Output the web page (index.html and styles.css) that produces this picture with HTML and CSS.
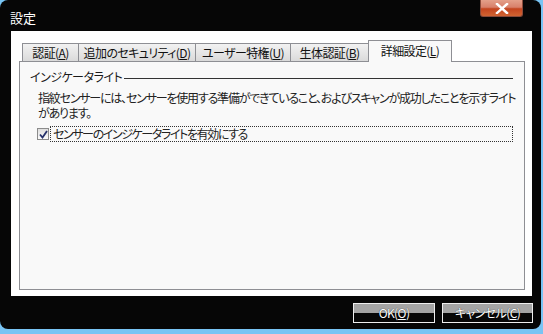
FILE: index.html
```html
<!DOCTYPE html>
<html lang="ja">
<head>
    <meta charset="UTF-8">
    <title>設定</title>
    <link rel="stylesheet" href="styles.css">
</head>
<body>
    <div class="window">
        <div class="titlebar">
            <span class="title">設定</span>
            <div class="close-btn">
                <svg width="18" height="11" viewBox="0 0 18 11">
                    <path d="M4 1 L14 10 M14 1 L4 10" stroke="#fff" stroke-width="2.4" stroke-linecap="square"/>
                </svg>
            </div>
        </div>

        <div class="client">
            <div class="tabs">
                <div class="tab tab-1">認証(<u>A</u>)</div>
                <div class="tab tab-2">追加のセキュリティ(<u>D</u>)</div>
                <div class="tab tab-3">ユーザー特権(<u>U</u>)</div>
                <div class="tab tab-4">生体認証(<u>B</u>)</div>
                <div class="tab tab-active">詳細設定(<u>L</u>)</div>
            </div>
            <div class="panel">
                <div class="group-title">
                    <span>インジケータライト</span>
                    <div class="group-line"></div>
                </div>
                <p class="description">指紋センサーには、センサーを使用する準備ができていること、およびスキャンが成功したことを示すライト<br>があります。</p>
                <div class="check-row">
                    <span class="checkbox">
                        <svg width="9" height="9" viewBox="0 0 9 9">
                            <path d="M1 4.5 L3.5 7.5 L8 1" fill="none" stroke="#24306a" stroke-width="1.8"/>
                        </svg>
                    </span>
                    <span class="check-label">センサーのインジケータライトを有効にする</span>
                </div>
            </div>
        </div>

        <div class="buttons">
            <div class="button btn-ok">OK(<u>O</u>)</div>
            <div class="button btn-cancel">キャンセル(<u>C</u>)</div>
        </div>
    </div>
</body>
</html>
```

FILE: styles.css
```css
* {
    box-sizing: border-box;
}

body {
    margin: 0;
    width: 543px;
    height: 334px;
    overflow: hidden;
    background: #78c4f4;
    font-family: "Noto Sans CJK JP", sans-serif;
    font-size: 12px;
    font-feature-settings: "palt";
    color: #000;
}

.window {
    width: 541px;
    height: 329px;
    background: #060606;
    border-radius: 8px;
    display: flex;
    flex-direction: column;
}

.titlebar {
    height: 31px;
    display: flex;
    justify-content: space-between;
    align-items: flex-start;
    padding: 0 18px 0 10px;
}

.title {
    color: #fff;
    font-size: 13px;
    line-height: 13px;
    margin-top: 11px;
}

.close-btn {
    width: 43px;
    height: 17px;
    border: 1px solid #8a4a3a;
    border-top: none;
    border-radius: 0 0 3px 3px;
    background: linear-gradient(#e4a08a 0%, #d8806a 45%, #c4441e 55%, #d06432 100%);
    display: flex;
    align-items: center;
    justify-content: center;
}

.client {
    margin-left: 11px;
    width: 521px;
    height: 265px;
    background: #fff;
    padding: 8px 0 0 8px;
}

.tabs {
    display: flex;
    align-items: flex-end;
    height: 22px;
    padding-left: 3px;
}

.tab {
    height: 18px;
    border: 1px solid #8e8f94;
    border-bottom: none;
    margin-right: -1px;
    background: linear-gradient(#f2f2f2, #dadada);
    text-align: center;
    line-height: 17px;
    color: #111;
    white-space: nowrap;
    letter-spacing: -0.6px;
}

.tab-1 { width: 57px; }
.tab-2 { width: 118px; }
.tab-3 { width: 96px; }
.tab-4 { width: 79px; }

.tab-active {
    width: 84px;
    height: 22px;
    background: #f9f9f9;
    margin-bottom: -1px;
    line-height: 19px;
}

.panel {
    width: 506px;
    height: 229px;
    border: 1px solid #8e8f94;
    background: #f9f9f9;
    padding: 8px 11px 0 10px;
}

.group-title {
    display: flex;
    align-items: center;
    height: 14px;
    line-height: 14px;
    color: #1a1a1a;
    letter-spacing: -0.5px;
}

.group-line {
    flex: 1;
    height: 1px;
    background: #333;
    margin: 3px 0 0 2px;
}

.description {
    margin: 6px 0 0 8px;
    line-height: 15px;
    color: #222;
    white-space: nowrap;
    letter-spacing: -1.2px;
}

.check-row {
    display: flex;
    align-items: center;
    margin: 6px 0 0 7px;
}

.checkbox {
    width: 12px;
    height: 12px;
    border: 1px solid #8b8b8b;
    background: linear-gradient(#dedede, #fbfbfb);
    display: flex;
    align-items: center;
    justify-content: center;
}

.check-label {
    width: 463px;
    height: 16px;
    margin-left: 1px;
    padding-left: 2px;
    line-height: 14px;
    border: 1px dotted #333;
    color: #222;
    letter-spacing: -1.4px;
}

.buttons {
    display: flex;
    justify-content: flex-end;
    gap: 7px;
    padding: 7px 8px 0 0;
}

.button {
    height: 20px;
    border: 1px solid #eee;
    background: linear-gradient(#a4a4a4 0%, #a4a4a4 50%, #080808 50%, #080808 100%);
    color: #fff;
    text-align: center;
    line-height: 18px;
    font-size: 12px;
    letter-spacing: -0.6px;
    text-shadow: 0 0 1px #000;
}

.btn-ok { width: 82px; }
.btn-cancel { width: 91px; }
```
